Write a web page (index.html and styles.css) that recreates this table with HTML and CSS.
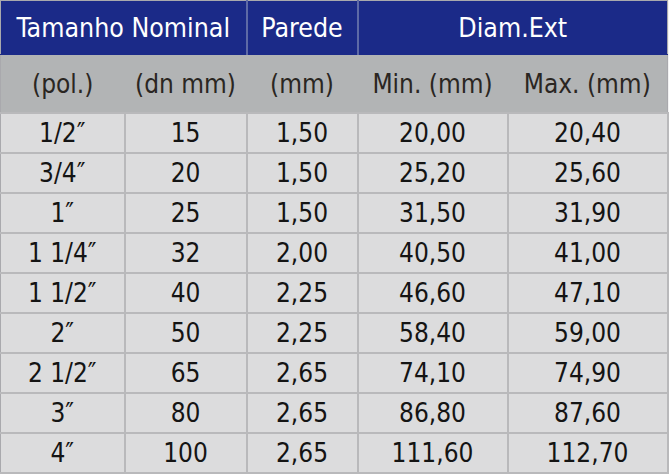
FILE: index.html
```html
<!DOCTYPE html>
<html lang="pt">
<head>
<meta charset="utf-8">
<title>Tabela de tubos</title>
<link rel="stylesheet" href="styles.css">
</head>
<body>
<table class="spec">
  <colgroup>
    <col class="c1"><col class="c2"><col class="c3"><col class="c4"><col class="c5">
  </colgroup>
  <thead>
    <tr class="head">
      <th colspan="2">Tamanho Nominal</th>
      <th>Parede</th>
      <th colspan="2">Diam.Ext</th>
    </tr>
    <tr class="sub">
      <th>(pol.)</th>
      <th>(dn mm)</th>
      <th>(mm)</th>
      <th>Min. (mm)</th>
      <th>Max. (mm)</th>
    </tr>
  </thead>
  <tbody>
    <tr><td>1/2″</td><td>15</td><td>1,50</td><td>20,00</td><td>20,40</td></tr>
    <tr><td>3/4″</td><td>20</td><td>1,50</td><td>25,20</td><td>25,60</td></tr>
    <tr><td>1″</td><td>25</td><td>1,50</td><td>31,50</td><td>31,90</td></tr>
    <tr><td>1 1/4″</td><td>32</td><td>2,00</td><td>40,50</td><td>41,00</td></tr>
    <tr><td>1 1/2″</td><td>40</td><td>2,25</td><td>46,60</td><td>47,10</td></tr>
    <tr><td>2″</td><td>50</td><td>2,25</td><td>58,40</td><td>59,00</td></tr>
    <tr><td>2 1/2″</td><td>65</td><td>2,65</td><td>74,10</td><td>74,90</td></tr>
    <tr><td>3″</td><td>80</td><td>2,65</td><td>86,80</td><td>87,60</td></tr>
    <tr><td>4″</td><td>100</td><td>2,65</td><td>111,60</td><td>112,70</td></tr>
  </tbody>
</table>
</body>
</html>
```

FILE: styles.css
```css
html, body {
  margin: 0;
  padding: 0;
  background: #f2f2f2;
}

.spec {
  border-collapse: collapse;
  table-layout: fixed;
  width: 667px;
  font-family: "DejaVu Sans Condensed", "DejaVu Sans", sans-serif;
  font-size: 26px;
  border: 1px solid #a9a9ad;
}

.c1 { width: 124px; }
.c2 { width: 122px; }
.c3 { width: 111px; }
.c4 { width: 150px; }
.c5 { width: 160px; }

.spec th,
.spec td {
  padding: 0;
  text-align: center;
  font-weight: normal;
  white-space: nowrap;
}

.head th {
  height: 53px;
  font-size: 26.5px;
  background: #1b2a88;
  color: #ffffff;
  border-left: 2px solid #5e6aa6;
  border-bottom: 1px solid #1b2a88;
}

.head th:first-child { border-left: none; }

.sub th {
  height: 57px;
  background: #b2b4b5;
  color: #2a2622;
}

.spec td {
  height: 38px;
  background: #dcdcdd;
  color: #141414;
  border: 2px solid #b9b9bb;
}

.spec td:first-child { border-left: none; }
```
